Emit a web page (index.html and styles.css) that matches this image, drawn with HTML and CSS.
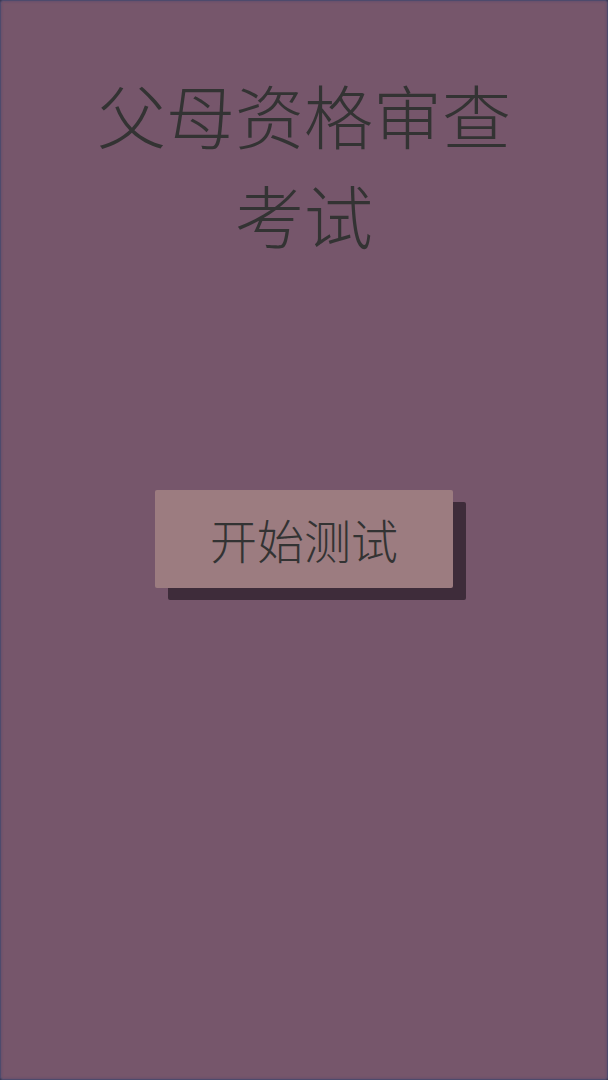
FILE: index.html
```html
<!DOCTYPE html>
<html lang="zh-CN">
<head>
<meta charset="utf-8">
<title>父母资格审查考试</title>
<link rel="stylesheet" href="styles.css">
</head>
<body>
<div class="screen">
  <h1 class="title">父母资格审查<br>考试</h1>
  <button class="start">开始测试</button>
</div>
</body>
</html>
```

FILE: styles.css
```css
html, body {
  margin: 0;
  padding: 0;
  background: #3c3a55;
}
.screen {
  box-sizing: border-box;
  width: 608px;
  height: 1080px;
  background: #76566b;
  border: 1px solid #4d4a6c;
  border-radius: 3px;
  box-shadow: inset 0 0 3px rgba(70, 70, 110, 0.6);
  display: flex;
  flex-direction: column;
  align-items: center;
  font-family: "Noto Sans CJK SC", "Noto Sans", sans-serif;
}
.title {
  margin: 63px 0 0;
  font-size: 69px;
  line-height: 100px;
  font-weight: 300;
  color: #333333;
  text-align: center;
  letter-spacing: 0;
}
.start {
  margin-top: 226px;
  width: 298px;
  height: 98px;
  padding: 0;
  border: none;
  border-radius: 2px;
  background: #9c7c80;
  box-shadow: 13px 12px 0 0 #3e2c3a;
  font-family: "Noto Sans CJK SC", "Noto Sans", sans-serif;
  font-size: 47px;
  font-weight: 300;
  color: #333333;
  line-height: 98px;
}
```
